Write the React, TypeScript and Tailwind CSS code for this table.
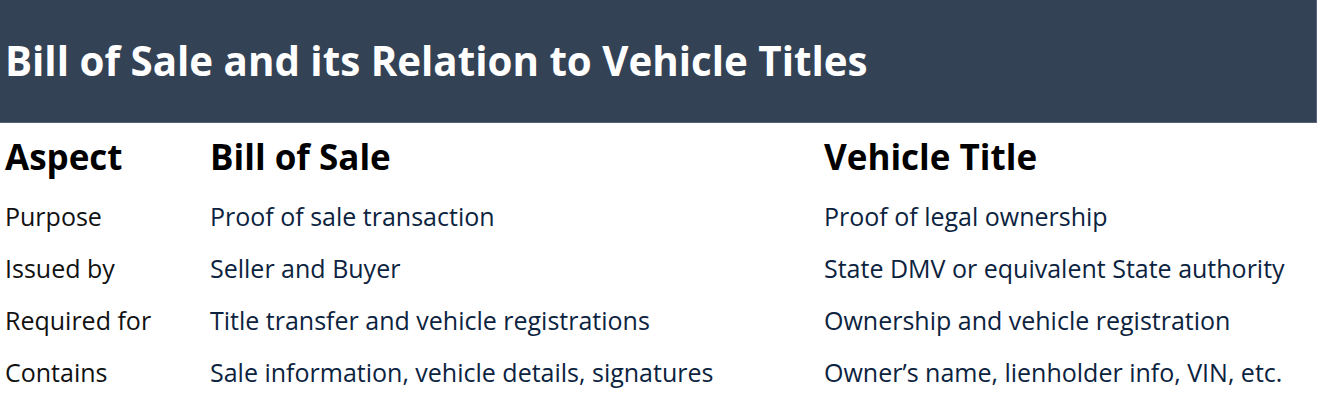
import React from "react";

const rows = [
  ["Purpose", "Proof of sale transaction", "Proof of legal ownership"],
  ["Issued by", "Seller and Buyer", "State DMV or equivalent State authority"],
  ["Required for", "Title transfer and vehicle registrations", "Ownership and vehicle registration"],
  ["Contains", "Sale information, vehicle details, signatures", "Owner\u2019s name, lienholder info, VIN, etc."],
];

export default function App() {
  return (
    <div className="w-[1317px] h-[417px] bg-white" style={{ fontFamily: '"Open Sans", "Noto Sans", sans-serif' }}>
      <div className="h-[123px] bg-[#344256] border-b border-r border-[#56647a] flex items-center px-[5px]">
        <h1 className="text-white font-bold text-[40.3px] leading-none pt-[1px]">Bill of Sale and its Relation to Vehicle Titles</h1>
      </div>
      <div className="grid grid-cols-[205px_614px_1fr] pl-[5px]">
        <div className="h-[68px] flex items-center pt-[1px] text-[35px] font-bold text-black">Aspect</div>
        <div className="h-[68px] flex items-center pt-[1px] text-[35px] font-bold text-black">Bill of Sale</div>
        <div className="h-[68px] flex items-center pt-[1px] text-[35px] font-bold text-black">Vehicle Title</div>
        {rows.map((r, i) => (
          <React.Fragment key={i}>
            <div className="h-[52px] flex items-center text-[25px] text-[#111111]">{r[0]}</div>
            <div className="h-[52px] flex items-center text-[25px] text-[#0c2340]">{r[1]}</div>
            <div className="h-[52px] flex items-center text-[25px] text-[#0c2340]">{r[2]}</div>
          </React.Fragment>
        ))}
      </div>
    </div>
  );
}
